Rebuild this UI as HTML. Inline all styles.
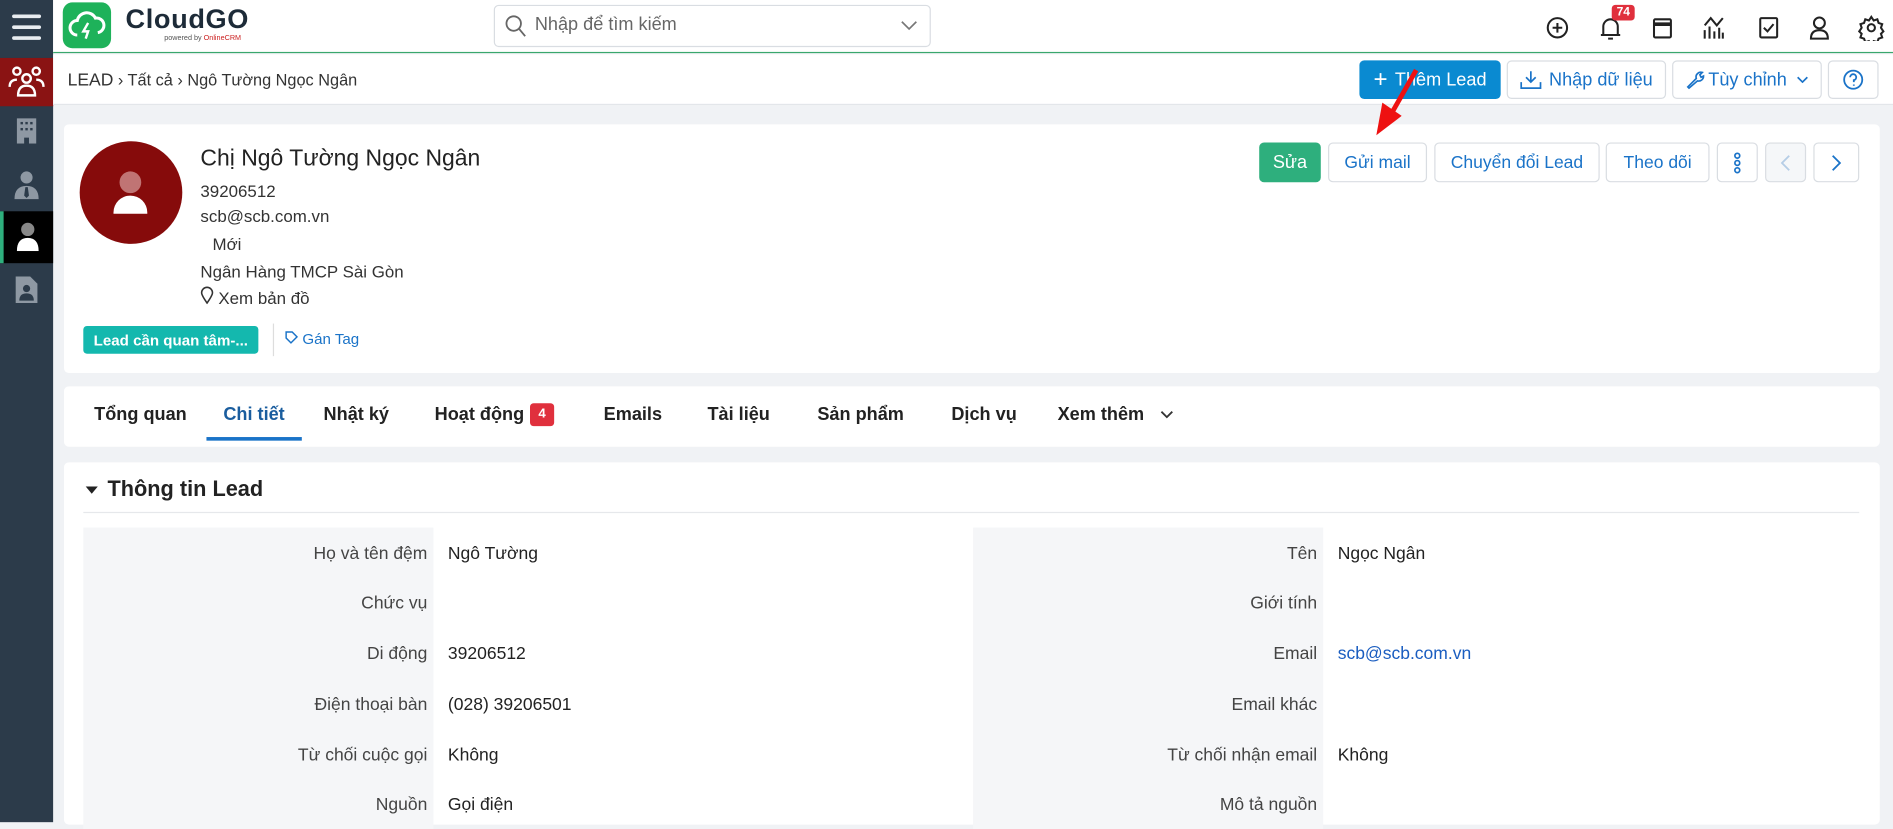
<!DOCTYPE html>
<html><head><meta charset="utf-8">
<style>
*{box-sizing:border-box;margin:0;padding:0}
html,body{width:1893px;height:822px;overflow:hidden;background:#f0f2f5}
#w{position:absolute;left:0;top:0;width:1568px;height:681px;transform:scale(1.2073);transform-origin:0 0;font-family:"Liberation Sans","Noto Sans CJK SC",sans-serif;font-size:14px;color:#222;background:#f0f2f5}
.a{position:absolute}
.btn{position:absolute;border:1px solid #d9dde2;border-radius:4px;background:#fff;color:#1a73c8;font-size:14.5px;display:flex;align-items:center;justify-content:center}
.lab{position:absolute;text-align:right;color:#444;font-size:14.5px}
.val{position:absolute;color:#222;font-size:14.5px}
.tab{position:absolute;top:335px;font-size:15px;font-weight:bold;color:#222}
</style></head><body><div id="w">
<div class="a" style="left:0;top:0;width:44px;height:681px;background:#2c3b4a"></div>
<div class="a" style="left:10px;top:12px;width:24px;height:3px;background:#e8ecf0;border-radius:2px"></div>
<div class="a" style="left:10px;top:21px;width:24px;height:3px;background:#e8ecf0;border-radius:2px"></div>
<div class="a" style="left:10px;top:30px;width:24px;height:3px;background:#e8ecf0;border-radius:2px"></div>
<div class="a" style="left:0;top:48px;width:44px;height:40px;background:#8a1313"></div>
<svg class="a" style="left:6px;top:52px" width="32" height="32" viewBox="0 0 32 32" fill="none" stroke="#fff" stroke-width="2"><circle cx="8" cy="7" r="3"/><circle cx="24" cy="7" r="3"/><circle cx="16" cy="13" r="3.5"/><path d="M2 20q0-6 6-6M30 20q0-6-6-6M9 27q0-8 7-8t7 8z"/></svg>
<svg class="a" style="left:12px;top:97px" width="20" height="22" viewBox="0 0 20 22"><path d="M2 1h16v21h-6v-5h-4v5H2z" fill="#8e98a3"/><g fill="#2c3b4a"><rect x="5" y="4" width="2" height="2"/><rect x="9" y="4" width="2" height="2"/><rect x="13" y="4" width="2" height="2"/><rect x="5" y="9" width="2" height="2"/><rect x="9" y="9" width="2" height="2"/><rect x="13" y="9" width="2" height="2"/></g></svg>
<svg class="a" style="left:11px;top:141px" width="22" height="24" viewBox="0 0 22 24"><circle cx="11" cy="6" r="5" fill="#8e98a3"/><path d="M1 24q0-11 10-11t10 11z" fill="#8e98a3"/><path d="M10 14h2l1 7-2 2-2-2z" fill="#2c3b4a"/></svg>
<div class="a" style="left:0;top:175px;width:44px;height:43px;background:#000;border-left:3px solid #2eaf7d"></div>
<svg class="a" style="left:13px;top:184px" width="20" height="24" viewBox="0 0 20 24"><circle cx="10" cy="6" r="5.5" fill="#888"/><path d="M1 24q0-11 9-11t9 11z" fill="#fff"/></svg>
<svg class="a" style="left:12px;top:228px" width="20" height="24" viewBox="0 0 20 24"><path d="M1 1h12l6 6v16H1z" fill="#8e98a3"/><circle cx="10" cy="11" r="3" fill="#2c3b4a"/><path d="M4 21q0-6 6-6t6 6z" fill="#2c3b4a"/></svg>
<div class="a" style="left:44px;top:0;width:1524px;height:44px;background:#fff;border-bottom:1.5px solid #3aa76d"></div>
<div class="a" style="left:52px;top:2px;width:40px;height:38px;background:#1eb25a;border-radius:8px"></div>
<svg class="a" style="left:56px;top:7px" width="32" height="28" viewBox="0 0 32 28"><path d="M8 22a6 6 0 0 1 0-12 8 8 0 0 1 15-2 6 6 0 0 1 2 12" fill="none" stroke="#fff" stroke-width="2.5"/><path d="M17 12l-4 7h4l-2 6" stroke="#fff" stroke-width="2" fill="none"/></svg>
<div class="a" style="left:104px;top:3px;font-size:22.5px;font-weight:bold;color:#1d2b38;letter-spacing:0.5px">CloudGO</div>
<div class="a" style="left:136px;top:29px;font-size:6px;color:#555">powered by <span style="color:#c22">OnlineCRM</span></div>
<div class="a" style="left:409px;top:4px;width:362px;height:35px;border:1px solid #d9dde2;border-radius:4px;background:#fff"></div>
<svg class="a" style="left:418px;top:12px" width="18" height="19" viewBox="0 0 18 19" fill="none" stroke="#666" stroke-width="1.5"><circle cx="7.5" cy="7.5" r="6"/><path d="M12 12l5 6"/></svg>
<div class="a" style="left:443px;top:12px;font-size:15px;color:#666">Nhập để tìm kiếm</div>
<svg class="a" style="left:746px;top:17px" width="14" height="9" viewBox="0 0 14 9" fill="none" stroke="#777" stroke-width="1.4"><path d="M1 1l6 6 6-6"/></svg>
<svg class="a" style="left:1280px;top:12px" width="290" height="22" viewBox="0 0 290 22" fill="none" stroke="#222" stroke-width="1.7">
<circle cx="10" cy="11" r="8"/><path d="M10 7v8M6 11h8"/>
<path d="M48 17V10a6 6 0 0 1 12 0v7zM46 17h16M52 20h4"/>
<rect x="90" y="4" width="14" height="15" rx="1"/><path d="M90 8h14" stroke-width="3"/>
<path d="M132 20v-7M136 20v-10M140 20v-6M144 20v-9M147 20v-5M132 9l5-6 5 6 5-6"/>
<rect x="178" y="3" width="14" height="16" rx="1"/><path d="M181 11l3 3 5-6"/>
<circle cx="227" cy="7" r="4.5"/><path d="M220 20q0-7 7-7t7 7z"/>
<circle cx="270" cy="11" r="3"/><path d="M270 2l2 3 3-1 1 3 3 1-1 3 2 3-2 2 1 3-3 1-1 3-3-1-2 3-2-3-3 1-1-3-3-1 1-3-2-2 2-3-1-3 3-1 1-3 3 1z"/>
</svg>
<div class="a" style="left:1335px;top:4px;background:#e0303d;color:#fff;font-size:10px;font-weight:bold;padding:1px 4px;border-radius:3px">74</div>
<div class="a" style="left:44px;top:45px;width:1524px;height:42px;background:#fff;border-bottom:1px solid #e3e6ea"></div>
<div class="a" style="left:56px;top:59px;font-size:13.5px;color:#333"><span style="font-size:14.5px">LEAD</span> › Tất cả › Ngô Tường Ngọc Ngân</div>
<div class="a" style="left:1126px;top:50px;width:117px;height:32px;background:#0a8ad1;border-radius:4px;color:#fff;font-size:15px;display:flex;align-items:center;justify-content:center"><span style="font-size:20px;margin-right:6px">+</span>Thêm Lead</div>
<div class="btn" style="left:1248px;top:50px;width:132px;height:32px;font-size:15px"><svg width="18" height="16" viewBox="0 0 18 16" fill="none" stroke="#1a73c8" stroke-width="1.4" style="margin-right:6px"><path d="M9 1v9M5 6l4 4 4-4M1 10v5h16v-5"/></svg>Nhập dữ liệu</div>
<div class="btn" style="left:1385px;top:50px;width:124px;height:32px;font-size:15px"><svg width="16" height="16" viewBox="0 0 16 16" fill="none" stroke="#1a73c8" stroke-width="1.4" style="margin-right:3px"><path d="M2 14l7-7a4 4 0 0 1 5-5l-2 2 1 2 2-1a4 4 0 0 1-5 4l-7 6z"/></svg>Tùy chỉnh<svg width="10" height="6" viewBox="0 0 10 6" fill="none" stroke="#1a73c8" stroke-width="1.4" style="margin-left:8px"><path d="M1 1l4 4 4-4"/></svg></div>
<div class="btn" style="left:1514px;top:50px;width:42px;height:32px"><svg width="18" height="18" viewBox="0 0 18 18" fill="none" stroke="#1a73c8" stroke-width="1.5"><circle cx="9" cy="9" r="7.5"/><path d="M6.5 7a2.5 2.5 0 1 1 3 2.4V11M9.5 13v1"/></svg></div>
<div class="a" style="left:53px;top:103px;width:1504px;height:206px;background:#fff;border-radius:4px"></div>
<div class="a" style="left:66px;top:117px;width:85px;height:85px;border-radius:50%;background:#860b0b"></div>
<div class="a" style="left:99px;top:142px;width:18px;height:18px;border-radius:50%;background:#c07474"></div>
<div class="a" style="left:94px;top:162px;width:28px;height:15px;border-radius:14px 14px 0 0;background:#fff"></div>
<div class="a" style="left:166px;top:121px;font-size:19px;color:#222">Chị Ngô Tường Ngọc Ngân</div>
<div class="a" style="left:166px;top:150px;font-size:14px;color:#333">39206512</div>
<div class="a" style="left:166px;top:171px;font-size:14px;color:#333">scb@scb.com.vn</div>
<div class="a" style="left:176px;top:194px;font-size:14px;color:#333">Mới</div>
<div class="a" style="left:166px;top:217px;font-size:14px;color:#333">Ngân Hàng TMCP Sài Gòn</div>
<div class="a" style="left:166px;top:237px;font-size:14px;color:#333"><svg width="11" height="15" viewBox="0 0 11 15" fill="none" stroke="#333" stroke-width="1.3"><path d="M5.5 14C2 9 1 7 1 5.5a4.5 4.5 0 0 1 9 0C10 7 9 9 5.5 14z"/></svg> Xem bản đồ</div>
<div class="a" style="left:69px;top:270px;width:145px;height:23px;background:#14b8ae;border-radius:3px;color:#fff;font-size:12.5px;font-weight:bold;display:flex;align-items:center;justify-content:center">Lead cần quan tâm-...</div>
<div class="a" style="left:226px;top:268px;width:1px;height:27px;background:#ddd"></div>
<div class="a" style="left:236px;top:274px;font-size:12.5px;color:#1a73c8"><svg width="11" height="11" viewBox="0 0 11 11" fill="none" stroke="#1a73c8" stroke-width="1.2"><path d="M1 1h5l4 4-5 5-4-4z"/></svg> Gán Tag</div>
<div class="a" style="left:1043px;top:118px;width:51px;height:33px;background:#2eaf7d;border-radius:4px;color:#fff;font-size:15px;display:flex;align-items:center;justify-content:center">Sửa</div>
<div class="btn" style="left:1100px;top:118px;width:82px;height:33px">Gửi mail</div>
<div class="btn" style="left:1188px;top:118px;width:137px;height:33px">Chuyển đổi Lead</div>
<div class="btn" style="left:1330px;top:118px;width:86px;height:33px">Theo dõi</div>
<div class="btn" style="left:1422px;top:118px;width:34px;height:33px"><svg width="6" height="18" viewBox="0 0 6 18" fill="none" stroke="#1a73c8" stroke-width="1.4"><circle cx="3" cy="3" r="2"/><circle cx="3" cy="9" r="2"/><circle cx="3" cy="15" r="2"/></svg></div>
<div class="btn" style="left:1462px;top:118px;width:34px;height:33px;background:#f5f7f9"><svg width="8" height="14" viewBox="0 0 8 14" fill="none" stroke="#b5cde6" stroke-width="1.5"><path d="M7 1L1 7l6 6"/></svg></div>
<div class="btn" style="left:1502px;top:118px;width:38px;height:33px"><svg width="8" height="14" viewBox="0 0 8 14" fill="none" stroke="#1a73c8" stroke-width="1.5"><path d="M1 1l6 6-6 6"/></svg></div>
<svg class="a" style="left:1130px;top:50px" width="60" height="70" viewBox="0 0 60 70"><path d="M43 8L22 45" stroke="#ee1111" stroke-width="4"/><path d="M10 62L15 35L31 46z" fill="#ee1111"/></svg>
<div class="a" style="left:53px;top:320px;width:1504px;height:50px;background:#fff;border-radius:4px"></div>
<div class="tab" style="left:78px">Tổng quan</div>
<div class="tab" style="left:185px;color:#1a5d9e">Chi tiết</div>
<div class="a" style="left:171px;top:362px;width:79px;height:2.5px;background:#1a73c8"></div>
<div class="tab" style="left:268px">Nhật ký</div>
<div class="tab" style="left:360px">Hoạt động</div>
<div class="a" style="left:439px;top:334px;width:20px;height:19px;background:#e0303d;border-radius:3px;color:#fff;font-size:11px;font-weight:bold;text-align:center;line-height:19px">4</div>
<div class="tab" style="left:500px">Emails</div>
<div class="tab" style="left:586px">Tài liệu</div>
<div class="tab" style="left:677px">Sản phẩm</div>
<div class="tab" style="left:788px">Dịch vụ</div>
<div class="tab" style="left:876px">Xem thêm</div>
<svg class="a" style="left:961px;top:340px" width="11" height="7" viewBox="0 0 11 7" fill="none" stroke="#333" stroke-width="1.5"><path d="M1 1l4.5 4.5L10 1"/></svg>
<div class="a" style="left:53px;top:383px;width:1504px;height:300px;background:#fff;border-radius:4px"></div>
<div class="a" style="left:71px;top:403px;width:0;height:0;border-left:5px solid transparent;border-right:5px solid transparent;border-top:6px solid #222"></div>
<div class="a" style="left:89px;top:395px;font-size:18px;font-weight:bold;color:#222">Thông tin Lead</div>
<div class="a" style="left:69px;top:424px;width:1471px;height:1px;background:#e6e8eb"></div>
<div class="a" style="left:69px;top:437px;width:290px;height:250px;background:#f5f6f8"></div>
<div class="a" style="left:806px;top:437px;width:290px;height:250px;background:#f5f6f8"></div>
<div class="lab" style="left:69px;width:285px;top:451px">Họ và tên đệm</div><div class="val" style="left:371px;top:451px">Ngô Tường</div>
<div class="lab" style="left:69px;width:285px;top:492px">Chức vụ</div>
<div class="lab" style="left:69px;width:285px;top:534px">Di động</div><div class="val" style="left:371px;top:534px">39206512</div>
<div class="lab" style="left:69px;width:285px;top:576px">Điện thoại bàn</div><div class="val" style="left:371px;top:576px">(028) 39206501</div>
<div class="lab" style="left:69px;width:285px;top:618px">Từ chối cuộc gọi</div><div class="val" style="left:371px;top:618px">Không</div>
<div class="lab" style="left:69px;width:285px;top:659px">Nguồn</div><div class="val" style="left:371px;top:659px">Gọi điện</div>
<div class="lab" style="left:806px;width:285px;top:451px">Tên</div><div class="val" style="left:1108px;top:451px">Ngọc Ngân</div>
<div class="lab" style="left:806px;width:285px;top:492px">Giới tính</div>
<div class="lab" style="left:806px;width:285px;top:534px">Email</div><div class="val" style="left:1108px;top:534px;color:#1a5dc0">scb@scb.com.vn</div>
<div class="lab" style="left:806px;width:285px;top:576px">Email khác</div>
<div class="lab" style="left:806px;width:285px;top:618px">Từ chối nhận email</div><div class="val" style="left:1108px;top:618px">Không</div>
<div class="lab" style="left:806px;width:285px;top:659px">Mô tả nguồn</div>
</div></body></html>
